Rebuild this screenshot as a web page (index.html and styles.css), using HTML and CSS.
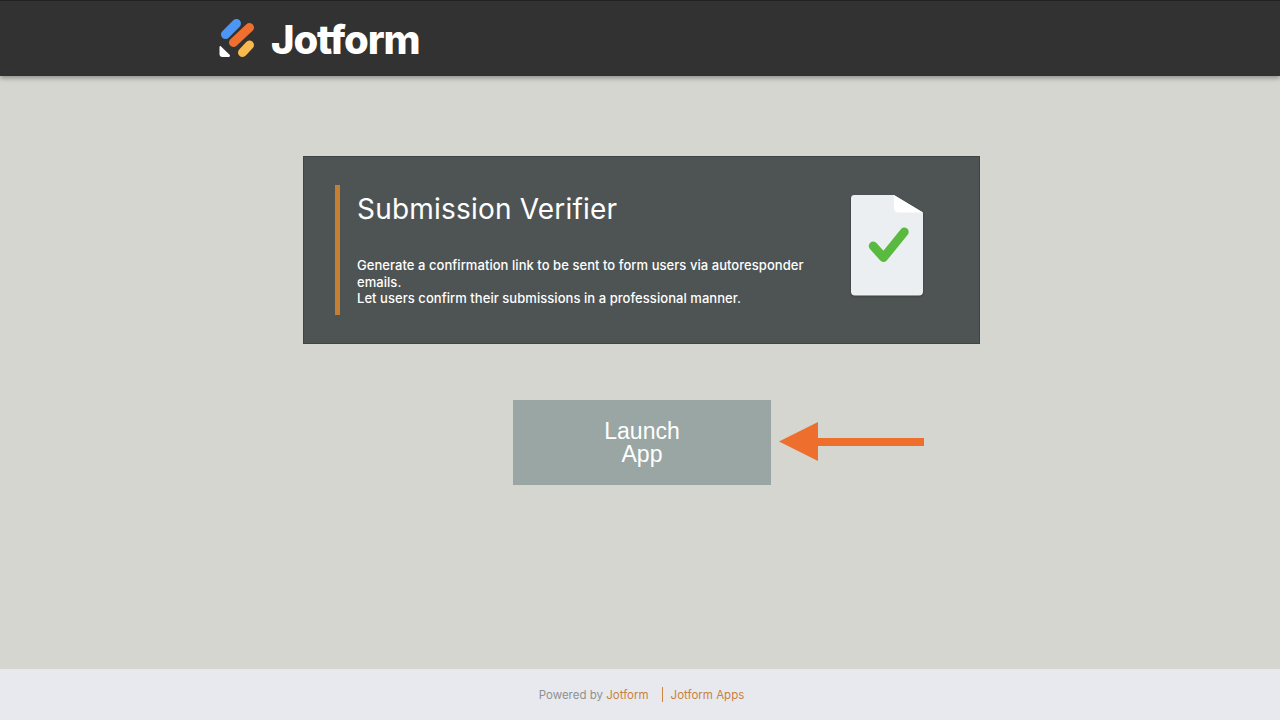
FILE: index.html
```html
<!DOCTYPE html>
<html lang="en">
<head>
<meta charset="utf-8">
<title>Submission Verifier</title>
<link rel="stylesheet" href="styles.css">
</head>
<body>
<div class="page">
  <header class="topbar">
    <svg class="logo-mark" width="36" height="40" viewBox="0 0 36 40">
      <g fill="none" stroke-linecap="round" stroke-width="9">
        <path d="M6.500 16.500 17.500 5.500" stroke="#4c97f5"/>
        <path d="M14.500 24.500 30.500 9.500" stroke="#f06f2e"/>
        <path d="M23.500 34.500 30.500 27" stroke="#f9b94f"/>
      </g>
      <path d="M1.800 28.300 10.600 36.800c.8.800.3 2.200-.9 2.200H3.500C1.500 39 .5 37.800.5 36V29c0-.8.800-1.200 1.300-.7Z" fill="#fff"/>
    </svg>
    <span class="wordmark">Jotform</span>
  </header>
  <main class="content">
    <section class="card">
      <div class="card-text">
        <h1 class="title">Submission Verifier</h1>
        <p class="desc">Generate a confirmation link to be sent to form users via autoresponder emails.<br>Let users confirm their submissions in a professional manner.</p>
      </div>
      <svg class="doc-icon" width="72" height="101" viewBox="0 0 73 101" preserveAspectRatio="none">
        <path d="M3.500 0H43.500L73 17.500V96.500a4 4 0 0 1-4 4H4a4 4 0 0 1-4-4V3.500a3.500 3.500 0 0 1 3.500-3.500Z" fill="#eceff1"/>
        <path d="M43.500 0 73 17.500H48a4.500 4.500 0 0 1-4.500-4.500Z" fill="#fff"/>
        <path d="M22.500 51 33 62.500 54 37" fill="none" stroke="#5aba3f" stroke-width="9" stroke-linecap="round" stroke-linejoin="round"/>
      </svg>
    </section>
    <div class="launch-row">
      <button class="launch" type="button">Launch<br>App</button>
      <svg class="arrow" width="145" height="39" viewBox="0 0 145 39">
        <path d="M0 19.500 39 0V16H145V24H39V39Z" fill="#ee6e2e"/>
      </svg>
    </div>
  </main>
  <footer class="footer">
    <span class="powered">Powered by <a class="link" href="#">Jotform</a></span>
    <span class="divider"></span>
    <a class="link" href="#">Jotform Apps</a>
  </footer>
</div>
</body>
</html>
```
FILE: styles.css
```css
* { box-sizing: border-box; }
html, body { margin: 0; height: 100%; }
body { background: #d5d6d0; font-family: "Inter", "Liberation Sans", sans-serif; overflow: hidden; }
.page { height: 720px; display: flex; flex-direction: column; }
.topbar {
  height: 76px;
  background: #323232;
  border-top: 1px solid #222;
  box-shadow: 0 2px 5px rgba(0,0,0,.35);
  display: flex;
  align-items: center;
  padding-left: 218.500px;
  gap: 16.500px;
  flex: none;
}
.logo-mark { flex: none; margin-top: -2px; }
.wordmark {
  font-family: "Inter", "Liberation Sans", sans-serif;
  font-weight: 800;
  font-size: 40px;
  letter-spacing: -1.200px;
  color: #fff;
  line-height: 1;
  margin-top: 2px;
}
.content { flex: 1; padding: 80px 0 0 303px; }
.card {
  width: 677px;
  height: 188px;
  background: #4e5454;
  border: 1px solid #3f4444;
  padding: 28px 56px 0 31px;
  display: flex;
  justify-content: space-between;
  align-items: flex-start;
}
.card-text {
  width: 470px;
  height: 130px;
  border-left: 5px solid #c47f32;
  padding-left: 17px;
}
.title {
  margin: 8px 0 0;
  font-weight: 400;
  font-size: 28px;
  line-height: 32px;
  letter-spacing: .2px;
  color: #fff;
  white-space: nowrap;
}
.desc {
  margin: 32px 0 0;
  font-size: 13px;
  font-weight: 500;
  line-height: 16.500px;
  letter-spacing: .05px;
  color: #fff;
}
.doc-icon { flex: none; margin-top: 10px; filter: drop-shadow(0 1px 1px rgba(0,0,0,.3)); }
.launch-row { position: relative; width: 258px; margin: 56px 0 0 210px; }
.launch {
  display: block;
  width: 258px;
  height: 85px;
  background: #99a6a4;
  border: 0;
  padding: 1px 0 0;
  color: #fff;
  font-family: "Liberation Sans", Arial, sans-serif;
  font-size: 23px;
  line-height: 23px;
}
.arrow { position: absolute; left: 266px; top: 22px; }
.footer {
  height: 51px;
  background: #e8e9ee;
  flex: none;
  display: flex;
  align-items: center;
  justify-content: center;
  font-size: 11.500px;
  color: #909090;
  padding-left: 3px;
}
.link { color: #c8813f; text-decoration: none; }
.divider { width: 1px; height: 15px; background: #d2853f; margin: 0 8px 0 13px; }
```
